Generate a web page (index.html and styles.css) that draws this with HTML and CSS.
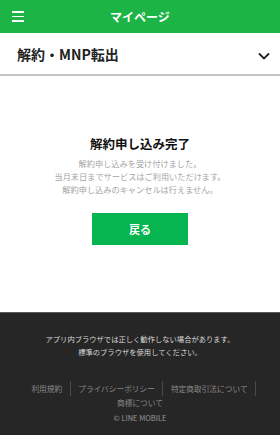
FILE: index.html
```html
<!DOCTYPE html>
<html lang="ja">
<head>
  <meta charset="UTF-8">
  <title>マイページ</title>
  <link rel="stylesheet" href="styles.css">
</head>
<body>
  <div class="page">
    <header class="topbar">
      <span class="menu-icon"><i></i><i></i><i></i></span>
      <h1>マイページ</h1>
    </header>

    <div class="section-head">
      <h2>解約・MNP転出</h2>
      <svg class="chevron" width="12" height="8" viewBox="0 0 12 8">
        <path d="M1 1.5 L6 6.5 L11 1.5" fill="none" stroke="#222" stroke-width="1.8"/>
      </svg>
    </div>

    <main class="content">
      <h3>解約申し込み完了</h3>
      <p class="note">
        解約申し込みを受け付けました。<br>
        当月末日までサービスはご利用いただけます。<br>
        解約申し込みのキャンセルは行えません。
      </p>
      <button class="back-btn">戻る</button>
    </main>

    <footer class="footer">
      <p class="warn">アプリ内ブラウザでは正しく動作しない場合があります。<br>標準のブラウザを使用してください。</p>
      <ul class="links">
        <li>利用規約</li>
        <li>プライバシーポリシー</li>
        <li>特定商取引法について</li>
        <li class="last">商標について</li>
      </ul>
      <p class="copy">© LINE MOBILE</p>
    </footer>
  </div>
</body>
</html>
```

FILE: styles.css
```css
html, body {
  margin: 0;
  padding: 0;
  height: 100%;
}
body {
  font-family: "Noto Sans CJK JP", "Noto Sans", sans-serif;
  background: #fff;
  color: #222;
}
.page {
  display: flex;
  flex-direction: column;
  min-height: 100%;
}
.topbar {
  height: 33px;
  background: #1db446;
  display: flex;
  align-items: center;
  justify-content: center;
  position: relative;
}
.topbar h1 {
  margin: 0;
  color: #fff;
  font-size: 12px;
  font-weight: bold;
}
.menu-icon {
  position: absolute;
  left: 12px;
  top: 11px;
  width: 12px;
  display: flex;
  flex-direction: column;
  gap: 3px;
}
.menu-icon i {
  display: block;
  height: 1.6px;
  background: #fff;
}
.section-head {
  height: 41px;
  display: flex;
  align-items: center;
  justify-content: space-between;
  padding: 0 10px 0 17px;
  border-bottom: 2px solid #c4c4c4;
}
.section-head h2 {
  margin: 0;
  font-size: 14px;
  font-weight: bold;
  color: #222;
}
.chevron {
  margin-top: 4px;
}
.content {
  flex: 1;
  display: flex;
  flex-direction: column;
  align-items: center;
  padding-top: 59px;
}
.content h3 {
  margin: 0;
  font-size: 12.5px;
  font-weight: bold;
  line-height: 17px;
  color: #111;
}
.note {
  margin: 5px 0 0;
  font-size: 8.2px;
  line-height: 13px;
  color: #a5a5a5;
  text-align: center;
}
.back-btn {
  margin-top: 17px;
  width: 96px;
  height: 32px;
  border: none;
  background: #06b54f;
  color: #fff;
  font-family: inherit;
  font-size: 11px;
  font-weight: bold;
}
.footer {
  height: 123px;
  box-sizing: border-box;
  background: #262626;
  border-top: 1px solid #5a5a5a;
  padding-top: 20px;
  text-align: center;
}
.warn {
  margin: 0;
  font-size: 7.3px;
  line-height: 13px;
  color: #d8d8d8;
}
.links {
  list-style: none;
  margin: 22px 0 0;
  padding: 0 18px;
  display: flex;
  flex-wrap: wrap;
  justify-content: center;
}
.links li {
  font-size: 7.7px;
  line-height: 15px;
  color: #888;
  padding: 0 7.5px;
  border-right: 1px solid #4a4a4a;
}
.links li.last {
  border-right: none;
  line-height: 13px;
}
.copy {
  margin: 2px 0 0;
  font-size: 7.5px;
  line-height: 13px;
  color: #999;
}
```
